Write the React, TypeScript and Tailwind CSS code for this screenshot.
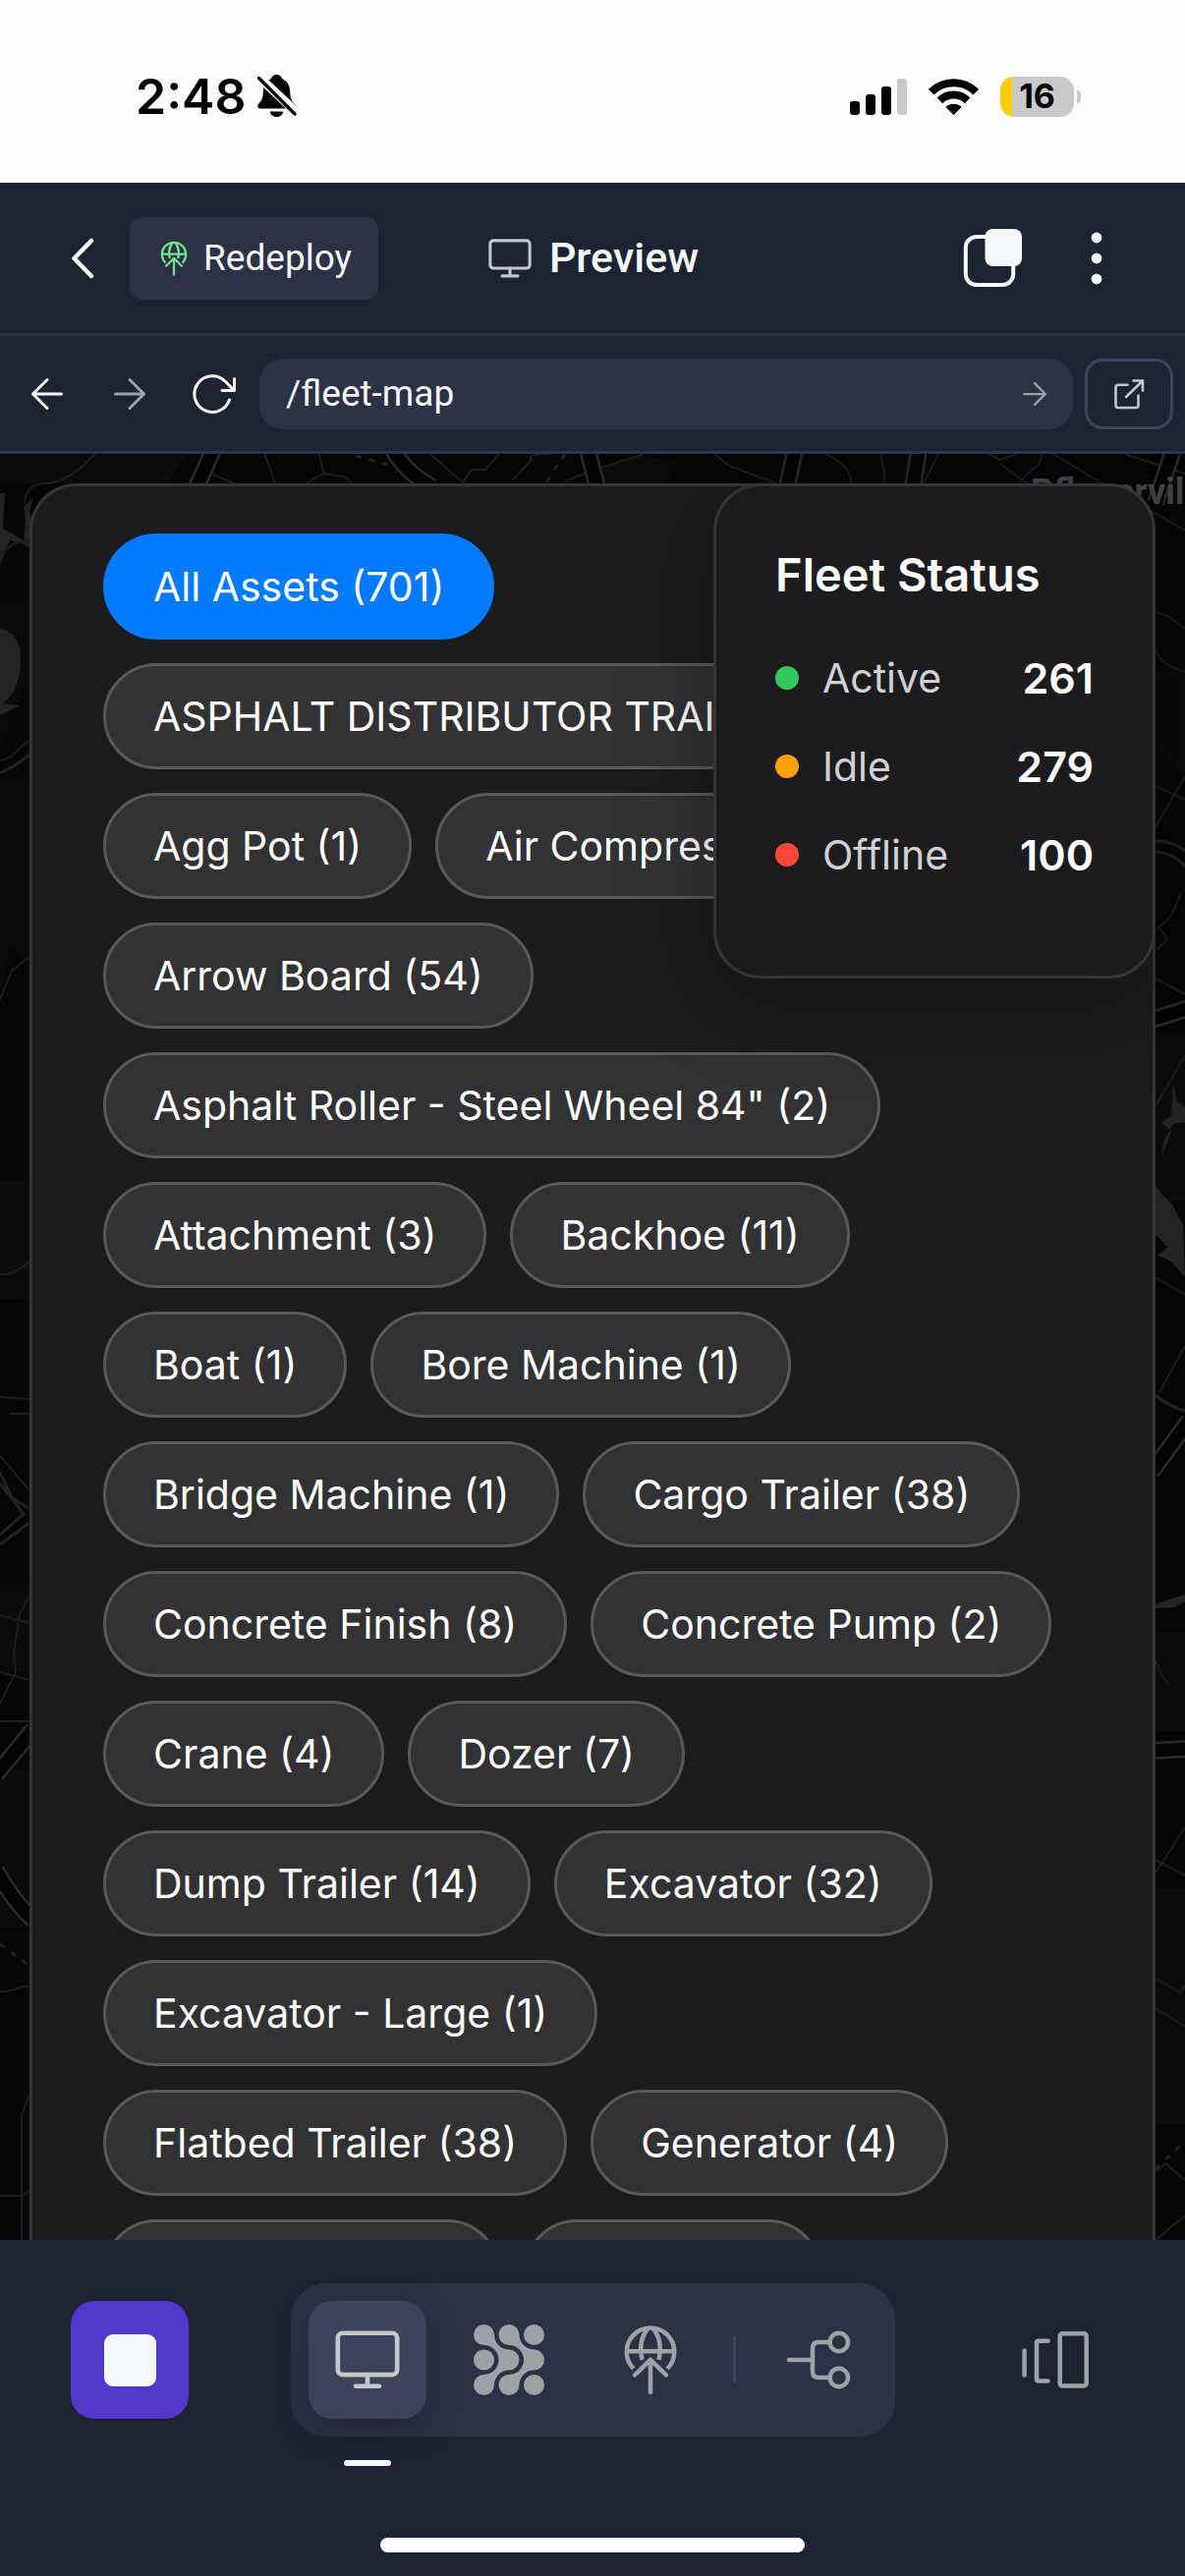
import React from "react";

const chips = [
  "All Assets (701)",
  "ASPHALT DISTRIBUTOR TRAILER (1)",
  "Agg Pot (1)",
  "Air Compressor (12)",
  "Arrow Board (54)",
  'Asphalt Roller - Steel Wheel 84" (2)',
  "Attachment (3)",
  "Backhoe (11)",
  "Boat (1)",
  "Bore Machine (1)",
  "Bridge Machine (1)",
  "Cargo Trailer (38)",
  "Concrete Finish (8)",
  "Concrete Pump (2)",
  "Crane (4)",
  "Dozer (7)",
  "Dump Trailer (14)",
  "Excavator (32)",
  "Excavator - Large (1)",
  "Flatbed Trailer (38)",
  "Generator (4)",
  "Gooseneck (12)",
  "Grader (9)",
];

const statuses = [
  { label: "Active", count: 261, dot: "bg-[#34c759]" },
  { label: "Idle", count: 279, dot: "bg-[#ff9f0a]" },
  { label: "Offline", count: 100, dot: "bg-[#ff453a]" },
];

type IconProps = { className?: string };

const stroke = {
  fill: "none",
  stroke: "currentColor",
  strokeLinecap: "round" as const,
  strokeLinejoin: "round" as const,
};

function BellOffIcon() {
  return (
    <svg viewBox="0 0 40 44" className="h-[44px] w-[40px]" aria-hidden="true">
      <path d="M19.5 0C22.5 0 24.5 1.8 25.5 4.6 31 7 33 11.500 33.200 18 33.500 25 35.500 27.500 38 30 40 32.500 39 34.500 36 34.500H3C0 34.500-.5 32 1 30 4 26.500 5.500 24.500 5.800 18 6 11.500 8.500 7 13.500 4.600 14.500 1.800 16.500 0 19.500 0Z" />
      <path d="M13 37.500h13c0 3.200-2.800 5.500-6.500 5.500s-6.500-2.300-6.500-5.500z" />
      <path d="M0 1L40 38.500" stroke="#fcfcfc" strokeWidth="9" />
      <path d="M1.500 3.500L38 40" stroke="#000" strokeWidth="3.200" strokeLinecap="round" />
    </svg>
  );
}

function SignalIcon() {
  return (
    <svg viewBox="0 0 58 37" className="h-[37px] w-[58px]" aria-hidden="true">
      <rect x="0" y="23" width="10" height="14" rx="3" />
      <rect x="16" y="16" width="10" height="21" rx="3" />
      <rect x="32" y="8" width="10" height="29" rx="3" />
      <rect x="48" y="0" width="10" height="37" rx="3" fill="#c9c9c9" />
    </svg>
  );
}

function WifiIcon() {
  return (
    <svg viewBox="0 0 51 37" className="h-[37px] w-[51px]" aria-hidden="true">
      <path d="M2.700 13.700A32.200 32.200 0 0 1 48.300 13.700" fill="none" stroke="#000" strokeWidth="8" />
      <path d="M11.400 22.400A20 20 0 0 1 39.600 22.400" fill="none" stroke="#000" strokeWidth="8" />
      <path d="M25.500 37L17.500 29A11.400 11.400 0 0 1 33.500 29Z" />
    </svg>
  );
}

function MonitorIcon({ className }: IconProps) {
  return (
    <svg viewBox="0 0 72 72" className={className} {...stroke} strokeWidth="4.600" aria-hidden="true">
      <rect x="5.800" y="8.800" width="60.400" height="42.300" rx="5" />
      <path d="M36 51V62.500M24 62.800H48" />
    </svg>
  );
}

function DeployIcon({ className }: IconProps) {
  return (
    <svg viewBox="0 0 72 72" className={className} {...stroke} strokeWidth="4.500" aria-hidden="true">
      <path strokeLinecap="butt" d="M18.800 45A24.300 24.300 0 1 1 53.200 45" />
      <path strokeLinecap="butt" d="M12 27.300H60M33.500 4C26.500 12 25 24 27.500 36M38.500 4C45.500 12 47 24 44.500 36" />
      <path d="M36 36V69M20 51.500L36 35.800 52 51.500" />
    </svg>
  );
}

function NodesIcon({ className }: IconProps) {
  const link =
    "M10.500 0A10.500 10.500 0 0 1 21 10.500A15 15 0 0 0 36 25.500A10.500 10.500 0 0 1 36 46.500A15 15 0 0 0 21 61.500A10.500 10.500 0 1 1 10.500 51A15 15 0 0 0 10.500 21A10.500 10.500 0 0 1 10.500 0Z";
  return (
    <svg viewBox="0 0 72 72" className={className} fill="currentColor" aria-hidden="true">
      <path d={link} />
      <path d={link} transform="translate(25.500 0)" />
      <circle cx="10.500" cy="36" r="10.500" />
      <circle cx="61.500" cy="10.500" r="10.500" />
      <circle cx="61.500" cy="61.500" r="10.500" />
    </svg>
  );
}

function BranchIcon({ className }: IconProps) {
  return (
    <svg viewBox="0 0 72 72" className={className} {...stroke} strokeWidth="4.500" aria-hidden="true">
      <path d="M6 36H30M47.500 18H36Q30 18 30 24V48Q30 54 36 54H47.500" />
      <circle cx="56.800" cy="18" r="9.200" />
      <circle cx="56.800" cy="54" r="9.200" />
    </svg>
  );
}

function PanelsIcon({ className }: IconProps) {
  return (
    <svg viewBox="0 0 72 72" className={className} {...stroke} strokeWidth="4.500" aria-hidden="true">
      <path d="M4.600 26.500V51.500M28.500 16.700H19Q17 16.700 17 18.700V55.500Q17 57.500 19 57.500H28.500" />
      <rect x="40.700" y="9.300" width="27" height="53.200" rx="2.500" />
    </svg>
  );
}

function WindowsIcon({ className }: IconProps) {
  return (
    <svg viewBox="0 0 72 72" className={className} aria-hidden="true">
      <rect x="7.800" y="14" width="48.400" height="49" rx="11" fill="none" stroke="currentColor" strokeWidth="4" />
      <rect x="27.500" y="6" width="37.500" height="38" rx="8" fill="currentColor" />
    </svg>
  );
}

function DotsIcon({ className }: IconProps) {
  return (
    <svg viewBox="0 0 72 72" className={className} fill="currentColor" aria-hidden="true">
      <circle cx="36" cy="15" r="5.400" />
      <circle cx="36" cy="36" r="5.400" />
      <circle cx="36" cy="57" r="5.400" />
    </svg>
  );
}

function ChevronLeftIcon({ className }: IconProps) {
  return (
    <svg viewBox="0 0 48 48" className={className} {...stroke} strokeWidth="4.500" aria-hidden="true">
      <path d="M33 6L15.500 24 33 42" />
    </svg>
  );
}

function ArrowLeftIcon({ className }: IconProps) {
  return (
    <svg viewBox="0 0 48 48" className={className} {...stroke} strokeWidth="3" aria-hidden="true">
      <path d="M38.500 24H9.500M24 9.500L9.500 24 24 38.500" />
    </svg>
  );
}

function ArrowRightIcon({ className }: IconProps) {
  return (
    <svg viewBox="0 0 48 48" className={className} {...stroke} strokeWidth="3" aria-hidden="true">
      <path d="M9.500 24H38.500M24 9.500L38.500 24 24 38.500" />
    </svg>
  );
}

function ReloadIcon({ className }: IconProps) {
  return (
    <svg viewBox="0 0 48 48" className={className} {...stroke} strokeWidth="3" aria-hidden="true">
      <path d="M41.500 30A18.300 18.300 0 1 1 37 11L46 20M46.500 8.500V20.500H34" />
    </svg>
  );
}

function OpenIcon({ className }: IconProps) {
  return (
    <svg viewBox="0 0 48 48" className={className} {...stroke} strokeWidth="2.600" aria-hidden="true">
      <path d="M22.500 14.700H13Q10.500 14.700 10.500 17.200V35.500Q10.500 38 13 38H31Q33.500 38 33.500 35.500V25.500" />
      <path d="M21 27L38 10.500M28.500 10.500H38V20.500" />
    </svg>
  );
}

function MapBackdrop() {
  return (
    <svg
      viewBox="0 0 1206 1818"
      preserveAspectRatio="xMidYMin slice"
      className="absolute inset-0 h-full w-full"
      aria-hidden="true"
    >
      <rect width="1206" height="1818" fill="#060606" />
      <g fill="#0b0b0b">
        <path d="M0 0H190L170 30H0ZM0 150H30V240H22L0 300ZM0 330H30V520L10 500 0 560ZM610 14L650 2 690 6 680 30H615Z" />
        <path d="M0 740H30V860H0ZM0 1150H30V1240H0ZM0 1340H30V1500H0ZM1176 220H1206V330L1176 300ZM1176 590H1206V760H1176ZM1176 1200H1206V1300H1176ZM1176 1460H1206V1700H1176Z" />
      </g>
      <g fill="#242424">
        <path d="M0 178C12 180 21 190 21 207C21 232 14 246 2 254L20 256 0 266Z" />
        <path d="M0 40L5 40 3 76 10 80 24 88 26 66 24 54 34 44 30 58 34 74 30 96 24 92 10 88 4 104 0 112Z" />
        <path d="M1194 641L1198 660 1206 664V680L1194 682 1184 700 1182 716 1192 690 1182 680 1192 674Z" />
        <path d="M1176 744C1184 760 1192 758 1196 770L1204 784 1206 838 1192 822 1184 818 1178 816 1188 808 1180 798 1176 796Z" />
        <path d="M1176 1171L1190 1166 1206 1161V1168L1196 1174 1176 1175Z" />
      </g>
      <g fill="none" stroke="#1d1d1d" strokeWidth="2">
        <path d="M97 0C80 18 62 30 46 30S26 40 24 52M215 20L242 32M270 0C270 10 278 16 279 30M325 0L329 20 312 30M329 20L353 24 357 30M438 0L472 30M508 0L494 16 480 16 470 30M560 0Q535 0 541 6L522 26M575 28L600 18" />
        <path d="M612 14L655 0M727 0L742 12 790 30M840 0C862 10 866 20 866 30M898 0C894 10 904 16 899 30M955 0L940 30M1005 0L1018 6 1035 0M1018 10L1045 30M1060 0Q1060 12 1050 16L1036 30M1072 0L1108 22 1206 78M1145 0L1206 20" />
        <path d="M0 104C10 92 16 90 30 88M0 312C14 310 16 300 30 292M0 555L12 526 30 512" />
        <path d="M0 835C15 836 22 828 30 822M0 960L30 962M10 977H30M0 1020L30 1055M0 1182L30 1190M30 1163L20 1180 14 1220 16 1240 0 1272M0 1240L30 1248M0 1290H30M0 1565C14 1566 20 1558 30 1560M0 1773H22L30 1768M22 1690V1818M30 1670L22 1690" />
        <path d="M1176 160L1190 166 1206 178M1176 200C1182 214 1192 216 1206 222M1176 338L1206 352M1176 380L1206 328M1180 480Q1192 476 1202 446M1178 480L1188 494 1178 504M1176 534L1206 550M1176 664L1206 612M1176 838L1206 856M1180 955L1206 908M1176 1228Q1184 1250 1190 1251M1176 1444L1206 1398M1176 1431L1206 1447M1176 1552L1201 1566 1206 1558M1176 1582L1206 1601M1176 1749L1186 1740 1206 1757M1176 1818L1206 1793" />
      </g>
      <g fill="none" stroke="#2a2a2a" strokeWidth="18">
        <path d="M217 -4L200 34M400 -4Q412 18 440 34M598 -4L608 34M809 -4L801 34M935 -4L929 34M1194 -4L1176 50" />
        <path d="M-4 1344Q18 1318 34 1298M-4 1442Q14 1474 34 1492M1172 576L1210 564M1172 1036L1210 984M1172 1320L1210 1318" />
      </g>
      <g fill="none" stroke="#030303" strokeWidth="13">
        <path d="M217 -4L200 34M400 -4Q412 18 440 34M598 -4L608 34M809 -4L801 34M935 -4L929 34M1194 -4L1176 50" />
        <path d="M-4 1344Q18 1318 34 1298M-4 1442Q14 1474 34 1492M1172 576L1210 564M1172 1036L1210 984M1172 1320L1210 1318" />
      </g>
      <g fill="none" stroke="#222" strokeWidth="3">
        <path d="M0 325Q16 318 30 306M0 1037L12 1062 30 1074M0 1048L24 1079 0 1100M0 1110L30 1088M1176 394Q1194 394 1206 404M1176 405Q1194 406 1206 420M1176 958Q1190 970 1206 974" />
        <path strokeDasharray="6 8" d="M362 2L405 14M575 0L555 30M0 1517L30 1539M1176 1746L1206 1717" />
      </g>
      <text x="1049" y="51" fill="#444" fontFamily="Roboto, sans-serif" fontWeight="700" fontSize="36">
        Pflugerville
      </text>
    </svg>
  );
}

function StatusBar() {
  return (
    <div className="flex h-[186px] shrink-0 items-center justify-between bg-[#fcfcfc] pt-[10px] pr-[106px] pl-[138px] text-black">
      <div className="flex items-center gap-3">
        <span className="text-[50px] leading-none font-semibold">2:48</span>
        <BellOffIcon />
      </div>
      <div className="flex items-center gap-[22px]">
        <SignalIcon />
        <WifiIcon />
        <div className="flex items-center gap-[3px]">
          <div className="flex h-[41px] w-[75px] items-center justify-center rounded-[14px] bg-linear-to-r from-[#ffcc00] from-16% to-[#c9c9c9] to-16%">
            <span className="text-[34px] leading-none font-bold">16</span>
          </div>
          <div className="h-[13px] w-[4px] rounded-r-full bg-[#c9c9c9]" />
        </div>
      </div>
    </div>
  );
}

function Header() {
  return (
    <header className="grid h-[156px] shrink-0 grid-cols-[1fr_auto_1fr] items-center border-b-[3px] border-[#2c3146] pr-[60px] pl-[60px] font-[Roboto,sans-serif]">
      <div className="flex items-center gap-6">
        <button aria-label="Back">
          <ChevronLeftIcon className="size-12" />
        </button>
        <button className="flex h-[84px] items-center gap-3 rounded-xl bg-[#2c3146] px-[27px] text-[37px]">
          <DeployIcon className="size-9 text-[#72e58b]" />
          Redeploy
        </button>
      </div>
      <h1 className="flex items-center gap-4 text-[43px] font-medium">
        <MonitorIcon className="size-12 text-[#c2c8cc]" />
        Preview
      </h1>
      <div className="-mr-[6px] flex items-center justify-end gap-[33px]">
        <button aria-label="Windows">
          <WindowsIcon className="size-[72px]" />
        </button>
        <button aria-label="More">
          <DotsIcon className="size-[72px]" />
        </button>
      </div>
    </header>
  );
}

function AddressBar() {
  return (
    <form
      onSubmit={(e) => e.preventDefault()}
      className="flex h-[120px] shrink-0 items-center border-b-[3px] border-[#2b344b] pr-3 pl-[6px] font-[Roboto,sans-serif]"
    >
      <button type="button" aria-label="Go back" className="flex w-[84px] justify-center">
        <ArrowLeftIcon className="size-12" />
      </button>
      <button type="button" aria-label="Go forward" className="flex w-[84px] justify-center text-[#9da2a6]">
        <ArrowRightIcon className="size-12" />
      </button>
      <button type="button" aria-label="Reload" className="flex w-[84px] justify-center">
        <ReloadIcon className="size-12" />
      </button>
      <div className="ml-[6px] flex h-[72px] min-w-0 flex-1 items-center rounded-3xl bg-[#2c3146] pr-[21px] pl-[27px]">
        <input
          aria-label="Path"
          defaultValue="/fleet-map"
          className="min-w-0 flex-1 bg-transparent text-[37px] leading-none outline-none"
        />
        <button aria-label="Go" className="text-[#9da2a6]">
          <ArrowRightIcon className="size-9" />
        </button>
      </div>
      <button
        type="button"
        aria-label="Open in new window"
        className="ml-3 flex h-[72px] w-[90px] items-center justify-center rounded-[18px] border-[3px] border-[#3c445c] text-[#c2c8cc]"
      >
        <OpenIcon className="size-12" />
      </button>
    </form>
  );
}

function Chip({ label, active }: { label: string; active: boolean }) {
  return (
    <button
      aria-pressed={active}
      className={
        "h-[108px] rounded-full border-[3px] px-12 text-[41px] leading-none whitespace-nowrap text-white " +
        (active ? "border-[#007aff] bg-[#007aff]" : "border-[#59595b] bg-[#323234]")
      }
    >
      {label}
    </button>
  );
}

function FleetStatus() {
  return (
    <section className="absolute top-[30px] right-[30px] w-[450px] rounded-[48px] border-[3px] border-[#353537] bg-[#1c1c1e] p-[60px] text-white shadow-[0_24px_96px_rgba(0,0,0,0.3)]">
      <h2 className="text-[47px] leading-[60px] font-semibold">Fleet Status</h2>
      <dl className="mt-12">
        {statuses.map((s) => (
          <div key={s.label} className="mb-9 flex items-center gap-6 text-[41px] leading-[54px]">
            <span className={"size-6 rounded-full " + s.dot} />
            <dt className="flex-1 text-[#d1d1d3]">{s.label}</dt>
            <dd className="text-[43px] font-semibold">{s.count}</dd>
          </div>
        ))}
      </dl>
    </section>
  );
}

function BottomBar() {
  return (
    <nav className="flex shrink-0 flex-col px-[72px] pt-11 pb-6">
      <div className="flex items-center justify-between">
        <button aria-label="Stop" className="flex size-[120px] items-center justify-center rounded-3xl bg-[#5138ca]">
          <span className="size-[53px] rounded-[9px] bg-[#f5f9fc]" />
        </button>
        <div className="flex items-center gap-6 rounded-[36px] bg-[#2c3146] p-[18px] text-[#9da2a6]">
          <button
            aria-label="Preview"
            aria-current="page"
            className="relative flex size-[120px] items-center justify-center rounded-3xl bg-[#3c445c] text-[#c2c8cc] shadow-[0_12px_36px_rgba(0,0,0,0.25)]"
          >
            <MonitorIcon className="size-[72px]" />
            <span className="absolute -bottom-12 left-9 h-[6px] w-12 rounded-full bg-[#f5f9fc]" />
          </button>
          <button aria-label="Agent" className="flex size-[120px] items-center justify-center">
            <NodesIcon className="size-[72px]" />
          </button>
          <button aria-label="Deploy" className="flex size-[120px] items-center justify-center">
            <DeployIcon className="size-[72px]" />
          </button>
          <span className="h-12 w-[3px] bg-[#3c445c]" />
          <button aria-label="Branches" className="flex size-[120px] items-center justify-center">
            <BranchIcon className="size-[72px]" />
          </button>
        </div>
        <button aria-label="Panels" className="flex size-[120px] items-center justify-center text-[#9da2a6]">
          <PanelsIcon className="size-[72px]" />
        </button>
      </div>
      <div className="mt-[103px] h-[15px] w-[432px] self-center rounded-full bg-white" />
    </nav>
  );
}

export default function App() {
  return (
    <div className="flex h-screen flex-col bg-[#1c2333] font-[Inter,sans-serif] text-[#f5f9fc]">
      <StatusBar />
      <Header />
      <AddressBar />
      <main className="relative min-h-0 flex-1 overflow-hidden bg-black p-[30px]">
        <MapBackdrop />
        <div className="relative flex flex-wrap gap-6 rounded-[48px] border-[3px] border-[#353537] bg-[#1c1c1e] px-[72px] py-12">
          {chips.map((label, i) => (
            <Chip key={label} label={label} active={i === 0} />
          ))}
        </div>
        <FleetStatus />
      </main>
      <BottomBar />
    </div>
  );
}
